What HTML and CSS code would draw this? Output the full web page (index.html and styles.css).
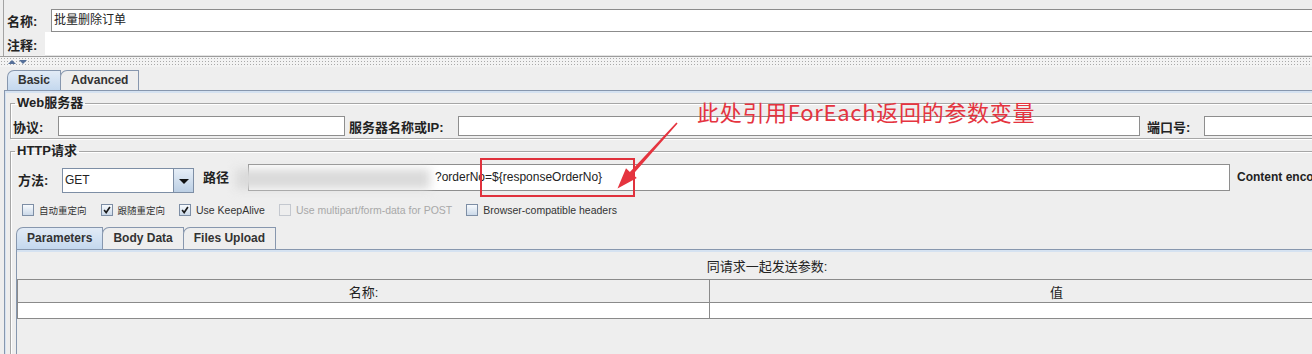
FILE: index.html
```html
<!DOCTYPE html>
<html lang="zh">
<head>
<meta charset="UTF-8" />
<title>HTTP请求 - 批量删除订单</title>
<link rel="stylesheet" href="styles.css">
</head>
<body>

<div class="page">

  <div class="head">
    <div class="top"></div>
    <div class="meta-row name-row">
      <label class="meta-label">名称:</label>
      <div class="meta-input">批量删除订单</div>
    </div>
    <div class="meta-row note-row">
      <label class="meta-label">注释:</label>
      <div class="meta-input"></div>
    </div>
  </div>

  <div class="splitter">
    <span class="tri up"></span><span class="tri down"></span>
  </div>

  <div class="tabs main-tabs">
    <div class="tab active">Basic</div>
    <div class="tab">Advanced</div>
  </div>

  <div class="tab-panel">

    <fieldset class="group web-group">
      <legend>Web服务器</legend>
      <div class="web-row">
        <label class="lbl proto-lbl">协议:</label>
        <div class="text-field proto"></div>
        <label class="lbl host-lbl">服务器名称或IP:</label>
        <div class="text-field host"></div>
        <label class="lbl port-lbl">端口号:</label>
        <div class="text-field port"></div>
      </div>
    </fieldset>

    <fieldset class="group http-group">
      <legend>HTTP请求</legend>

      <div class="method-row">
        <label class="lbl method-lbl">方法:</label>
        <div class="combo">
          <span class="combo-value">GET</span>
          <span class="combo-btn"><span class="caret"></span></span>
        </div>
        <label class="lbl path-lbl">路径</label>
        <div class="text-field path"><span class="path-text">?orderNo=${responseOrderNo}</span></div>
        <label class="lbl enc-lbl">Content encoding:</label>
        <div class="text-field enc"></div>
      </div>

      <div class="check-row">
        <div class="check"><span class="box"></span><span class="check-text cjk">自动重定向</span></div>
        <div class="check"><span class="box"><svg viewBox="0 0 12 12"><path d="M2.5 6 L5 9 L9.5 2.5" /></svg></span><span class="check-text cjk">跟随重定向</span></div>
        <div class="check"><span class="box"><svg viewBox="0 0 12 12"><path d="M2.5 6 L5 9 L9.5 2.5" /></svg></span><span class="check-text">Use KeepAlive</span></div>
        <div class="check disabled"><span class="box"></span><span class="check-text">Use multipart/form-data for POST</span></div>
        <div class="check"><span class="box"></span><span class="check-text">Browser-compatible headers</span></div>
      </div>

      <div class="tabs param-tabs">
        <div class="tab active">Parameters</div>
        <div class="tab">Body Data</div>
        <div class="tab">Files Upload</div>
      </div>

      <div class="param-panel">
        <div class="param-title">同请求一起发送参数:</div>
        <table class="param-table">
          <thead>
            <tr>
              <th class="col-name">名称:</th>
              <th class="col-value">值</th>
            </tr>
          </thead>
          <tbody>
            <tr><td></td><td></td></tr>
          </tbody>
        </table>
      </div>
    </fieldset>

  </div>

  <!-- blurred part of the path and the red notes drawn over the screen -->
  <div class="smudge"></div>
  <div class="mark-text">此处引用ForEach返回的参数变量</div>
  <div class="mark-box"></div>
  <svg class="mark-arrow" width="1312" height="354" viewBox="0 0 1312 354">
    <polygon points="677.6,123.4 632.9,174.5 636.8,178.1 617.5,188.5 626,168.3 629.9,171.9 676.4,122.6" />
  </svg>

</div>

</body>
</html>
```

FILE: styles.css
```css
body {
  margin: 0;
  height: 354px;
  overflow: hidden;
  background: #eeeeee;
  font-family: "Liberation Sans", "Noto Sans CJK SC", sans-serif;
  font-size: 12px;
  color: #222;
}
.page {
  position: relative;
  width: 1560px;
  height: 354px;
}

/* name / comment */
.head {
  margin-left: 3px;
  border-left: 1px solid #a3a3a3;
}
.top {
  height: 9px;
}
.meta-row {
  display: flex;
  align-items: center;
}
.meta-label {
  box-sizing: border-box;
  padding-left: 3px;
  font-size: 13px;
  font-weight: bold;
  color: #222;
}
.meta-input {
  flex: 1;
  box-sizing: border-box;
  background: #fff;
  font-size: 12px;
  padding-left: 2px;
}
.name-row .meta-label {
  width: 47px;
}
.name-row .meta-input {
  height: 23px;
  line-height: 21px;
  border: 1px solid #8c8c8c;
}
.note-row .meta-label {
  width: 41px;
}
.note-row .meta-input {
  height: 24px;
  border-bottom: 1px solid #e4e4e4;
}

.splitter {
  height: 10px;
  border-top: 1px solid #9c9c9c;
  background-color: #f3f3f3;
  background-image: radial-gradient(circle, #a9a9a9 0.7px, transparent 1px);
  background-size: 3px 3px;
  padding-left: 8px;
  display: flex;
  align-items: center;
  gap: 3px;
}
.tri {
  width: 0;
  height: 0;
  border-left: 4px solid transparent;
  border-right: 4px solid transparent;
}
.tri.up {
  border-bottom: 4px solid #55709a;
}
.tri.down {
  border-top: 4px solid #55709a;
}

/* tabs */
.tabs {
  display: flex;
  align-items: flex-end;
}
.tab {
  box-sizing: border-box;
  border: 1px solid #8797ae;
  border-bottom: none;
  border-top-left-radius: 7px;
  padding: 0 10px;
  margin-right: -1px;
  background: #eeeeee;
  font-weight: bold;
  color: #333;
}
.tab.active {
  background: linear-gradient(#e2ebf6, #c4d8ee);
}
.main-tabs {
  margin-top: 3px;
  padding-left: 7px;
}
.main-tabs .tab {
  height: 20px;
  line-height: 19px;
}

.tab-panel {
  margin-left: 4px;
  border-top: 1px solid #8797ae;
  border-left: 1px solid #8797ae;
  box-shadow: inset 0 2px 0 #d5e2f1, inset 1px 0 0 #d5e2f1;
  height: 300px;
}

/* titled groups */
.group {
  margin: 4px 0 0 5px;
  padding: 0 0 2px 1px;
  border: 1px solid #a6a6a6;
  box-shadow: inset 1px 1px 0 #fff, 1px 1px 0 #fff;
  min-width: 0;
}
.group legend {
  margin-left: 3px;
  padding: 0 2px;
  font-size: 13px;
  font-weight: bold;
  line-height: 16px;
  color: #222;
}
.lbl {
  box-sizing: border-box;
  font-size: 13px;
  font-weight: bold;
  color: #222;
  white-space: nowrap;
}
.text-field {
  box-sizing: border-box;
  background: #fff;
  border: 1px solid #8e8e8e;
}

.web-row {
  display: flex;
  align-items: center;
  margin-top: 5px;
  height: 20px;
}
.web-row .text-field {
  height: 20px;
}
.proto-lbl {
  width: 46px;
  padding-left: 1px;
}
.proto {
  width: 287px;
}
.host-lbl {
  width: 113px;
  padding-left: 4px;
}
.host {
  width: 682px;
}
.port-lbl {
  width: 64px;
  padding-left: 7px;
}
.port {
  width: 300px;
}

.http-group {
  margin-top: 4px;
  height: 260px;
}
.method-row {
  display: flex;
  align-items: flex-start;
  margin-top: 5px;
}
.method-lbl {
  width: 50px;
  padding-left: 6px;
  margin-top: 4px;
  line-height: 25px;
}
.combo {
  display: flex;
  width: 132px;
  height: 25px;
  margin-top: 4px;
  box-sizing: border-box;
  border: 1px solid #7d8ea5;
  background: #fff;
}
.combo-value {
  flex: 1;
  line-height: 23px;
  padding-left: 2px;
}
.combo-btn {
  width: 19px;
  border-left: 1px solid #7d8ea5;
  background: linear-gradient(#e6eef7, #bccfe4);
  display: flex;
  align-items: center;
  justify-content: center;
}
.caret {
  width: 0;
  height: 0;
  margin-top: 2px;
  border-left: 5px solid transparent;
  border-right: 5px solid transparent;
  border-top: 5px solid #111;
}
.path-lbl {
  width: 54px;
  padding-left: 9px;
  line-height: 27px;
}
.path {
  width: 982px;
  height: 27px;
  line-height: 25px;
  padding-left: 186px;
}
.path-text {
  color: #222;
}
.enc-lbl {
  padding-left: 7px;
  line-height: 27px;
  font-size: 12px;
}
.enc {
  width: 200px;
  height: 27px;
}

/* check boxes */
.check-row {
  display: flex;
  align-items: center;
  margin: 10px 0 0 10px;
  height: 14px;
  gap: 14px;
}
.check {
  display: flex;
  align-items: center;
  gap: 5px;
}
.box {
  width: 12px;
  height: 12px;
  box-sizing: border-box;
  border: 1px solid #7d8ea5;
  background: linear-gradient(#f7fafd, #cbd9e9);
}
.box svg {
  display: block;
  width: 10px;
  height: 10px;
  fill: none;
  stroke: #1a1a1a;
  stroke-width: 2;
}
.check-text {
  font-size: 10.5px;
  color: #333;
}
.check-text.cjk {
  font-size: 9.5px;
}
.check.disabled .box {
  border-color: #c4c8cf;
  background: #eeeeee;
}
.check.disabled .check-text {
  color: #a8a8a8;
}

/* parameters */
.param-tabs {
  margin: 10px 0 0 4px;
}
.param-tabs .tab {
  height: 22px;
  line-height: 21px;
}
.param-panel {
  margin-left: 4px;
  width: 1500px;
  height: 120px;
  border-top: 1px solid #8797ae;
  border-left: 1px solid #8797ae;
  box-shadow: inset 0 2px 0 #d5e2f1;
}
.param-title {
  text-align: center;
  font-size: 13px;
  line-height: 16px;
  padding-top: 9px;
  height: 16px;
  color: #222;
}
.param-table {
  width: 1387px;
  border-collapse: collapse;
  margin-top: 4px;
}
.param-table th {
  height: 22px;
  padding: 0;
  border: 1px solid #8a8a8a;
  background: #eeeeee;
  font-size: 13px;
  font-weight: normal;
  color: #222;
}
.param-table .col-name {
  width: 691px;
}
.param-table td {
  height: 15px;
  padding: 0;
  background: #fff;
  border: 1px solid #8a8a8a;
  border-top: none;
}

/* notes drawn on the screenshot */
.smudge {
  position: absolute;
  left: 236px;
  top: 169px;
  width: 194px;
  height: 20px;
  background: #dadada;
  filter: blur(5px);
}
.mark-text {
  position: absolute;
  left: 697px;
  top: 96px;
  font-family: "Noto Sans CJK SC", sans-serif;
  font-size: 22px;
  letter-spacing: 0.7px;
  line-height: 30px;
  color: #e5343f;
  white-space: nowrap;
}
.mark-box {
  position: absolute;
  left: 480px;
  top: 158px;
  width: 155px;
  height: 39px;
  box-sizing: border-box;
  border: 2px solid #e0323d;
}
.mark-arrow {
  position: absolute;
  left: 0;
  top: 0;
  pointer-events: none;
}
.mark-arrow polygon {
  fill: #e5343f;
}
```
